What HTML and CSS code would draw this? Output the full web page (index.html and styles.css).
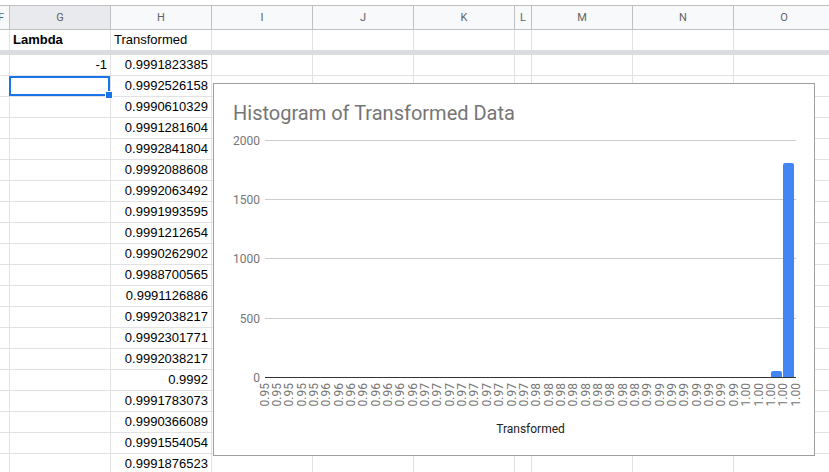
FILE: index.html
```html
<!DOCTYPE html>
<html lang="en">
<head>
    <meta charset="UTF-8">
    <meta name="viewport" content="width=device-width, initial-scale=1.0">
    <title>Transformed Data</title>
    <link rel="stylesheet" href="styles.css">
</head>
<body>

<section class="sheet">
    <!-- Column headers -->
    <div class="row head">
        <div class="cell cf"><span>F</span></div>
        <div class="cell cg active">G</div>
        <div class="cell ch">H</div>
        <div class="cell ci">I</div>
        <div class="cell cj">J</div>
        <div class="cell ck">K</div>
        <div class="cell cl">L</div>
        <div class="cell cm">M</div>
        <div class="cell cn">N</div>
        <div class="cell co">O</div>
    </div>

    <!-- Frozen first row -->
    <div class="row frozen">
        <div class="cell cf"></div><div class="cell cg bold">Lambda</div><div class="cell ch">Transformed</div><div class="cell ci"></div><div class="cell cj"></div><div class="cell ck"></div><div class="cell cl"></div><div class="cell cm"></div><div class="cell cn"></div><div class="cell co"></div>
    </div>
    <div class="freeze-bar"></div>

    <!-- Data rows -->
    <div class="row"><div class="cell cf"></div><div class="cell cg num">-1</div><div class="cell ch num">0.9991823385</div><div class="cell ci"></div><div class="cell cj"></div><div class="cell ck"></div><div class="cell cl"></div><div class="cell cm"></div><div class="cell cn"></div><div class="cell co"></div></div>
    <div class="row"><div class="cell cf"></div><div class="cell cg selected"></div><div class="cell ch num">0.9992526158</div><div class="cell ci"></div><div class="cell cj"></div><div class="cell ck"></div><div class="cell cl"></div><div class="cell cm"></div><div class="cell cn"></div><div class="cell co"></div></div>
    <div class="row"><div class="cell cf"></div><div class="cell cg"></div><div class="cell ch num">0.9990610329</div><div class="cell ci"></div><div class="cell cj"></div><div class="cell ck"></div><div class="cell cl"></div><div class="cell cm"></div><div class="cell cn"></div><div class="cell co"></div></div>
    <div class="row"><div class="cell cf"></div><div class="cell cg"></div><div class="cell ch num">0.9991281604</div><div class="cell ci"></div><div class="cell cj"></div><div class="cell ck"></div><div class="cell cl"></div><div class="cell cm"></div><div class="cell cn"></div><div class="cell co"></div></div>
    <div class="row"><div class="cell cf"></div><div class="cell cg"></div><div class="cell ch num">0.9992841804</div><div class="cell ci"></div><div class="cell cj"></div><div class="cell ck"></div><div class="cell cl"></div><div class="cell cm"></div><div class="cell cn"></div><div class="cell co"></div></div>
    <div class="row"><div class="cell cf"></div><div class="cell cg"></div><div class="cell ch num">0.9992088608</div><div class="cell ci"></div><div class="cell cj"></div><div class="cell ck"></div><div class="cell cl"></div><div class="cell cm"></div><div class="cell cn"></div><div class="cell co"></div></div>
    <div class="row"><div class="cell cf"></div><div class="cell cg"></div><div class="cell ch num">0.9992063492</div><div class="cell ci"></div><div class="cell cj"></div><div class="cell ck"></div><div class="cell cl"></div><div class="cell cm"></div><div class="cell cn"></div><div class="cell co"></div></div>
    <div class="row"><div class="cell cf"></div><div class="cell cg"></div><div class="cell ch num">0.9991993595</div><div class="cell ci"></div><div class="cell cj"></div><div class="cell ck"></div><div class="cell cl"></div><div class="cell cm"></div><div class="cell cn"></div><div class="cell co"></div></div>
    <div class="row"><div class="cell cf"></div><div class="cell cg"></div><div class="cell ch num">0.9991212654</div><div class="cell ci"></div><div class="cell cj"></div><div class="cell ck"></div><div class="cell cl"></div><div class="cell cm"></div><div class="cell cn"></div><div class="cell co"></div></div>
    <div class="row"><div class="cell cf"></div><div class="cell cg"></div><div class="cell ch num">0.9990262902</div><div class="cell ci"></div><div class="cell cj"></div><div class="cell ck"></div><div class="cell cl"></div><div class="cell cm"></div><div class="cell cn"></div><div class="cell co"></div></div>
    <div class="row"><div class="cell cf"></div><div class="cell cg"></div><div class="cell ch num">0.9988700565</div><div class="cell ci"></div><div class="cell cj"></div><div class="cell ck"></div><div class="cell cl"></div><div class="cell cm"></div><div class="cell cn"></div><div class="cell co"></div></div>
    <div class="row"><div class="cell cf"></div><div class="cell cg"></div><div class="cell ch num">0.9991126886</div><div class="cell ci"></div><div class="cell cj"></div><div class="cell ck"></div><div class="cell cl"></div><div class="cell cm"></div><div class="cell cn"></div><div class="cell co"></div></div>
    <div class="row"><div class="cell cf"></div><div class="cell cg"></div><div class="cell ch num">0.9992038217</div><div class="cell ci"></div><div class="cell cj"></div><div class="cell ck"></div><div class="cell cl"></div><div class="cell cm"></div><div class="cell cn"></div><div class="cell co"></div></div>
    <div class="row"><div class="cell cf"></div><div class="cell cg"></div><div class="cell ch num">0.9992301771</div><div class="cell ci"></div><div class="cell cj"></div><div class="cell ck"></div><div class="cell cl"></div><div class="cell cm"></div><div class="cell cn"></div><div class="cell co"></div></div>
    <div class="row"><div class="cell cf"></div><div class="cell cg"></div><div class="cell ch num">0.9992038217</div><div class="cell ci"></div><div class="cell cj"></div><div class="cell ck"></div><div class="cell cl"></div><div class="cell cm"></div><div class="cell cn"></div><div class="cell co"></div></div>
    <div class="row"><div class="cell cf"></div><div class="cell cg"></div><div class="cell ch num">0.9992</div><div class="cell ci"></div><div class="cell cj"></div><div class="cell ck"></div><div class="cell cl"></div><div class="cell cm"></div><div class="cell cn"></div><div class="cell co"></div></div>
    <div class="row"><div class="cell cf"></div><div class="cell cg"></div><div class="cell ch num">0.9991783073</div><div class="cell ci"></div><div class="cell cj"></div><div class="cell ck"></div><div class="cell cl"></div><div class="cell cm"></div><div class="cell cn"></div><div class="cell co"></div></div>
    <div class="row"><div class="cell cf"></div><div class="cell cg"></div><div class="cell ch num">0.9990366089</div><div class="cell ci"></div><div class="cell cj"></div><div class="cell ck"></div><div class="cell cl"></div><div class="cell cm"></div><div class="cell cn"></div><div class="cell co"></div></div>
    <div class="row"><div class="cell cf"></div><div class="cell cg"></div><div class="cell ch num">0.9991554054</div><div class="cell ci"></div><div class="cell cj"></div><div class="cell ck"></div><div class="cell cl"></div><div class="cell cm"></div><div class="cell cn"></div><div class="cell co"></div></div>
    <div class="row"><div class="cell cf"></div><div class="cell cg"></div><div class="cell ch num">0.9991876523</div><div class="cell ci"></div><div class="cell cj"></div><div class="cell ck"></div><div class="cell cl"></div><div class="cell cm"></div><div class="cell cn"></div><div class="cell co"></div></div>
</section>

<!-- Floating chart over the sheet -->
<div class="chart">
    <svg width="600" height="371" viewBox="0 0 600 371">
        <text class="chart-title" x="19" y="36">Histogram of Transformed Data</text>

        <!-- Gridlines -->
        <g class="grid">
            <line x1="51" y1="56.5" x2="582" y2="56.5"/>
            <line x1="51" y1="115.5" x2="582" y2="115.5"/>
            <line x1="51" y1="174.5" x2="582" y2="174.5"/>
            <line x1="51" y1="234.5" x2="582" y2="234.5"/>
        </g>

        <!-- Y axis labels -->
        <g class="axis-label y-label">
            <text x="46" y="61">2000</text>
            <text x="46" y="120">1500</text>
            <text x="46" y="179">1000</text>
            <text x="46" y="239">500</text>
            <text x="46" y="298">0</text>
        </g>

        <!-- Bars -->
        <path class="bar" d="M557 293 V289 Q557 287 559 287 H566 Q568 287 568 289 V293 Z"/>
        <path class="bar" d="M569 293 V81 Q569 79 571 79 H578 Q580 79 580 81 V293 Z"/>

        <line class="baseline" x1="51" y1="293.5" x2="582" y2="293.5"/>

        <!-- X axis labels -->
        <g class="axis-label x-label">
            <text transform="translate(50.5 299) rotate(-90)">0.95</text>
            <text transform="translate(62.85 299) rotate(-90)">0.95</text>
            <text transform="translate(75.2 299) rotate(-90)">0.95</text>
            <text transform="translate(87.55 299) rotate(-90)">0.95</text>
            <text transform="translate(99.9 299) rotate(-90)">0.95</text>
            <text transform="translate(112.25 299) rotate(-90)">0.96</text>
            <text transform="translate(124.6 299) rotate(-90)">0.96</text>
            <text transform="translate(136.95 299) rotate(-90)">0.96</text>
            <text transform="translate(149.3 299) rotate(-90)">0.96</text>
            <text transform="translate(161.65 299) rotate(-90)">0.96</text>
            <text transform="translate(174 299) rotate(-90)">0.96</text>
            <text transform="translate(186.35 299) rotate(-90)">0.96</text>
            <text transform="translate(198.7 299) rotate(-90)">0.96</text>
            <text transform="translate(211.05 299) rotate(-90)">0.97</text>
            <text transform="translate(223.4 299) rotate(-90)">0.97</text>
            <text transform="translate(235.75 299) rotate(-90)">0.97</text>
            <text transform="translate(248.1 299) rotate(-90)">0.97</text>
            <text transform="translate(260.45 299) rotate(-90)">0.97</text>
            <text transform="translate(272.8 299) rotate(-90)">0.97</text>
            <text transform="translate(285.15 299) rotate(-90)">0.97</text>
            <text transform="translate(297.5 299) rotate(-90)">0.97</text>
            <text transform="translate(309.85 299) rotate(-90)">0.97</text>
            <text transform="translate(322.2 299) rotate(-90)">0.98</text>
            <text transform="translate(334.55 299) rotate(-90)">0.98</text>
            <text transform="translate(346.9 299) rotate(-90)">0.98</text>
            <text transform="translate(359.25 299) rotate(-90)">0.98</text>
            <text transform="translate(371.6 299) rotate(-90)">0.98</text>
            <text transform="translate(383.95 299) rotate(-90)">0.98</text>
            <text transform="translate(396.3 299) rotate(-90)">0.98</text>
            <text transform="translate(408.65 299) rotate(-90)">0.98</text>
            <text transform="translate(421 299) rotate(-90)">0.98</text>
            <text transform="translate(433.35 299) rotate(-90)">0.99</text>
            <text transform="translate(445.7 299) rotate(-90)">0.99</text>
            <text transform="translate(458.05 299) rotate(-90)">0.99</text>
            <text transform="translate(470.4 299) rotate(-90)">0.99</text>
            <text transform="translate(482.75 299) rotate(-90)">0.99</text>
            <text transform="translate(495.1 299) rotate(-90)">0.99</text>
            <text transform="translate(507.45 299) rotate(-90)">0.99</text>
            <text transform="translate(519.8 299) rotate(-90)">0.99</text>
            <text transform="translate(532.15 299) rotate(-90)">1.00</text>
            <text transform="translate(544.5 299) rotate(-90)">1.00</text>
            <text transform="translate(556.85 299) rotate(-90)">1.00</text>
            <text transform="translate(569.2 299) rotate(-90)">1.00</text>
            <text transform="translate(581.55 299) rotate(-90)">1.00</text>
        </g>

        <text class="axis-title" x="316.5" y="349">Transformed</text>
    </svg>
</div>

</body>
</html>
```

FILE: styles.css
```css
body {
    margin: 0;
    padding: 0;
    font-family: "Liberation Sans", Arial, sans-serif;
    font-size: 13px;
    color: #000;
    background-color: #fff;
    overflow: hidden;
}

.sheet {
    padding-top: 5px;
}

.row {
    display: flex;
    height: 21px;
}

.cell {
    flex: none;
    box-sizing: border-box;
    height: 100%;
    padding: 0 3px;
    border-right: 1px solid #e2e2e3;
    border-bottom: 1px solid #e2e2e3;
    line-height: 20px;
    white-space: nowrap;
    overflow: hidden;
}

/* Column widths (including right border) */
.cf { width: 10px; padding: 0; }
.cg, .ch, .ci, .cj, .ck, .cm, .cn, .co { width: 101px; }
.cl { width: 17px; padding: 0; }

/* Column header row */
.head {
    height: 24px;
    border-top: 1px solid #c0c0c0;
    background-color: #f8f9fa;
}

.head .cell {
    padding: 0;
    border-color: #c0c0c0;
    text-align: center;
    line-height: 23px;
    font-family: Roboto, "Liberation Sans", sans-serif;
    font-size: 11px;
    color: #5f6368;
}

.head .cf {
    display: flex;
    justify-content: flex-end;
    padding-right: 5px;
}

.head .active {
    background-color: #e8eaed;
}

/* Frozen row + divider */
.frozen {
    height: 20px;
}

.frozen .cell {
    border-bottom: none;
}

.bold {
    font-weight: bold;
}

.freeze-bar {
    height: 5px;
    background-color: #dadce0;
}

.num {
    text-align: right;
}

/* Selected cell */
.selected {
    position: relative;
    overflow: visible;
}

.selected::after {
    content: "";
    position: absolute;
    top: 0;
    left: -1px;
    right: 0;
    bottom: 0;
    border: 2px solid #1a73e8;
}

.selected::before {
    content: "";
    position: absolute;
    right: -3px;
    bottom: -3px;
    width: 6px;
    height: 6px;
    background-color: #1a73e8;
    border: 1px solid #fff;
    z-index: 1;
}

/* Chart */
.chart {
    position: absolute;
    left: 213px;
    top: 83px;
    width: 600px;
    height: 371px;
    border: 1px solid #9e9e9e;
    background-color: #fff;
}

.chart svg {
    display: block;
    font-family: Roboto, "Liberation Sans", sans-serif;
}

.chart-title {
    font-size: 20px;
    fill: #757575;
}

.grid line {
    stroke: #cccccc;
    stroke-width: 1;
}

.baseline {
    stroke: #333;
    stroke-width: 1;
}

.bar {
    fill: #4285f4;
}

.axis-label {
    font-size: 12px;
    fill: #757575;
}

.y-label text {
    text-anchor: end;
}

.x-label text {
    text-anchor: end;
    dominant-baseline: central;
}

.axis-title {
    font-size: 12px;
    fill: #222;
    text-anchor: middle;
}
```
